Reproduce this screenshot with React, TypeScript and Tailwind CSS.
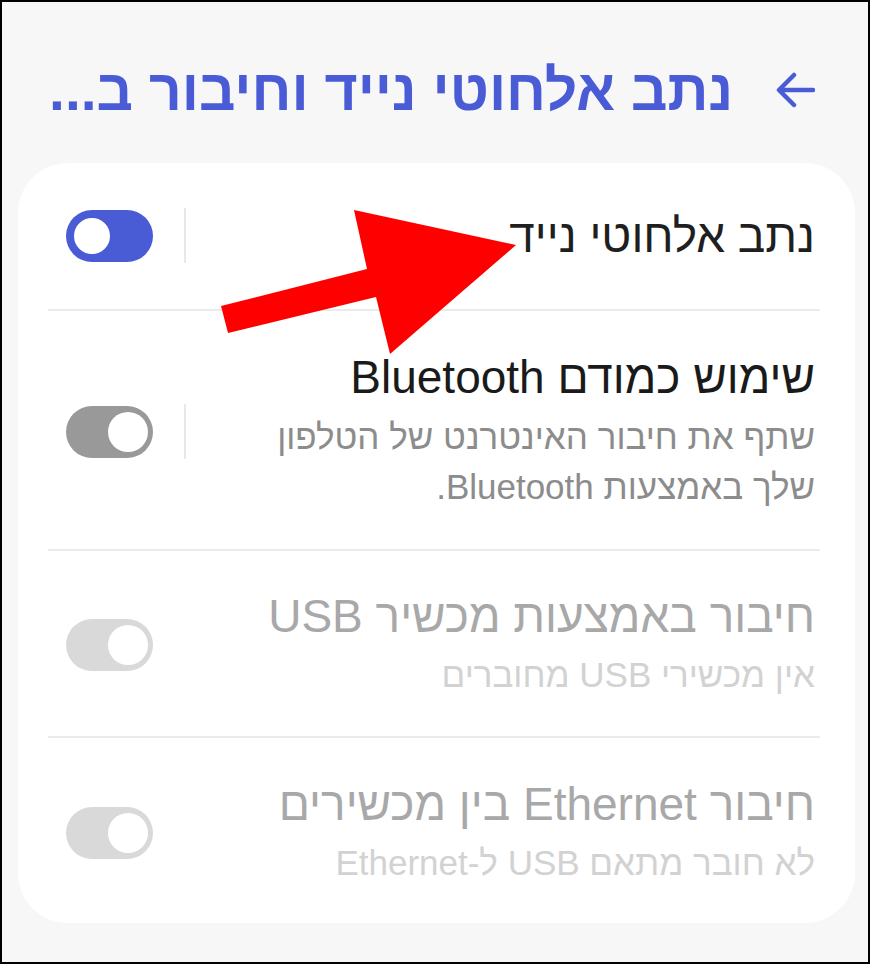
import React from 'react';

const font = { fontFamily: '"Liberation Sans", "DejaVu Sans", sans-serif' };

type ToggleProps = { variant: 'on' | 'dark' | 'disabled' };

const Toggle = ({ variant }: ToggleProps) => {
  if (variant === 'on') {
    return (
      <div className="w-[87px] h-[52px] rounded-full bg-[#4a5bd6] flex items-center justify-start pl-[4px] shrink-0" dir="ltr">
        <div className="w-[44px] h-[44px] rounded-full bg-white border-[4px] border-[#4a5bd6]" />
      </div>
    );
  }
  const track = variant === 'dark' ? 'bg-[#999999]' : 'bg-[#d9d9d9]';
  return (
    <div className={`w-[87px] h-[52px] rounded-full ${track} flex items-center justify-end pr-[5px] shrink-0`} dir="ltr">
      <div className="w-[40px] h-[40px] rounded-full bg-white" />
    </div>
  );
};

const Divider = () => <div className="h-[2px] bg-[#ebebeb] ml-[30px] mr-[35px]" />;

export default function App() {
  return (
    <div
      dir="rtl"
      className="relative w-[870px] h-[964px] border-2 border-black bg-[#f7f7f7] overflow-hidden"
      style={font}
    >
      {/* header */}
      <div className="flex items-center h-[60px] mt-[58px] pr-[53px] gap-[42px]">
        <svg width="40" height="40" viewBox="0 0 40 40" className="shrink-0">
          <path d="M38 20H5M19 5L4 20l15 15" fill="none" stroke="#4a5bd6" strokeWidth="4.5" strokeLinecap="round" strokeLinejoin="round" />
        </svg>
        <h1 className="text-[57px] font-bold text-[#4a5bd6] leading-none whitespace-nowrap">נתב אלחוטי נייד וחיבור ב...</h1>
      </div>

      {/* card */}
      <div className="mt-[43px] mx-[16px] mr-[13px] bg-white rounded-[50px]">
        <div className="flex items-center pr-[40px] pl-[48px] pt-[45px] pb-[46px]">
          <div className="flex-1 text-[46px] leading-[52px] text-[#1f1f1f]">נתב אלחוטי נייד</div>
          <div className="w-[2px] h-[55px] bg-[#e8e8e8] ml-[31px]" />
          <Toggle variant="on" />
        </div>
        <Divider />

        <div className="flex items-center pr-[40px] pl-[48px] pt-[40px] pb-[37px]">
          <div className="flex-1">
            <div className="text-[46px] leading-[52px] text-[#1a1a1a]">שימוש כמודם Bluetooth</div>
            <div className="text-[35px] leading-[50px] text-[#8c8c8c] mt-[9px]">
              שתף את חיבור האינטרנט של הטלפון
              <br />
              שלך באמצעות Bluetooth.
            </div>
          </div>
          <div className="w-[2px] h-[55px] bg-[#e8e8e8] ml-[31px]" />
          <Toggle variant="dark" />
        </div>
        <Divider />

        <div className="flex items-center pr-[40px] pl-[48px] pt-[39px] pb-[36px]">
          <div className="flex-1">
            <div className="text-[46px] leading-[52px] text-[#a8a8a8]">חיבור באמצעות מכשיר USB</div>
            <div className="text-[35px] leading-[50px] text-[#d2d2d2] mt-[8px]">אין מכשירי USB מחוברים</div>
          </div>
          <Toggle variant="disabled" />
        </div>
        <Divider />

        <div className="flex items-center pr-[40px] pl-[48px] pt-[40px] pb-[35px]">
          <div className="flex-1">
            <div className="text-[46px] leading-[52px] text-[#a8a8a8]">חיבור Ethernet בין מכשירים</div>
            <div className="text-[35px] leading-[50px] text-[#d2d2d2] mt-[8px]">לא חובר מתאם USB ל-Ethernet</div>
          </div>
          <Toggle variant="disabled" />
        </div>
      </div>

      {/* red annotation arrow */}
      <svg className="absolute left-0 top-0 pointer-events-none" width="870" height="964" viewBox="0 0 870 964">
        <polygon
          points="219,304 365,267 352,208 514,243 388,352 374,295 226,331"
          fill="#ff0000"
        />
      </svg>
    </div>
  );
}
